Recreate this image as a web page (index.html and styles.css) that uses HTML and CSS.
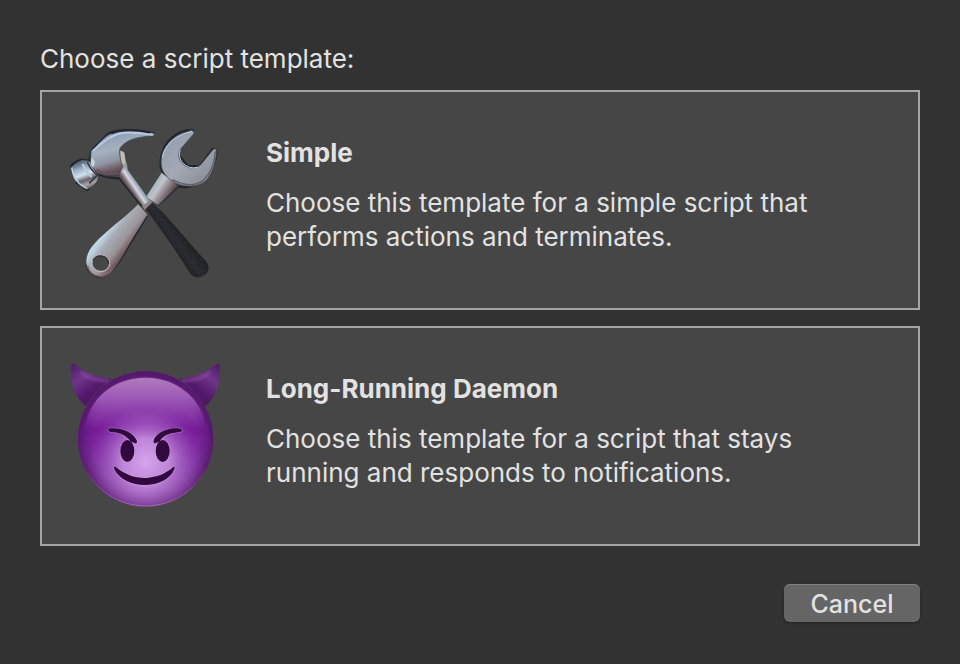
FILE: index.html
```html
<!DOCTYPE html>
<html lang="en">
<head>
<meta charset="utf-8">
<meta name="viewport" content="width=device-width, initial-scale=1">
<title>Choose a script template</title>
<link rel="stylesheet" href="styles.css">
</head>
<body>
<main class="dialog">
  <h1 class="prompt">Choose a script template:</h1>
  <div class="templates">
    <button type="button" class="template">
      <svg class="icon" viewBox="0 0 510 510" aria-hidden="true">
        <defs>
          <linearGradient id="wrenchHead" x1="0" y1="0" x2="1" y2="1"><stop offset="0" stop-color="#929daf"/><stop offset=".5" stop-color="#a3a8b4"/><stop offset="1" stop-color="#82858e"/></linearGradient>
          <linearGradient id="wrenchShaft" gradientUnits="userSpaceOnUse" x1="150" y1="340" x2="222" y2="396"><stop offset="0" stop-color="#bfd5e4"/><stop offset=".22" stop-color="#a9adb5"/><stop offset=".6" stop-color="#99949a"/><stop offset=".85" stop-color="#755a60"/><stop offset="1" stop-color="#49474c"/></linearGradient>
          <linearGradient id="wrenchNeck" gradientUnits="userSpaceOnUse" x1="284" y1="205" x2="332" y2="238"><stop offset="0" stop-color="#a5b5c4"/><stop offset=".3" stop-color="#c1c3ca"/><stop offset=".65" stop-color="#8d858c"/><stop offset="1" stop-color="#59464c"/></linearGradient>
          <linearGradient id="hammerHead" gradientUnits="userSpaceOnUse" x1="130" y1="65" x2="165" y2="185"><stop offset="0" stop-color="#8e9eb5"/><stop offset=".35" stop-color="#a6b0c0"/><stop offset=".62" stop-color="#8f95a2"/><stop offset=".82" stop-color="#6d5961"/><stop offset="1" stop-color="#393f47"/></linearGradient>
          <linearGradient id="hammerFace" gradientUnits="userSpaceOnUse" x1="65" y1="140" x2="94" y2="222"><stop offset="0" stop-color="#59677a"/><stop offset=".22" stop-color="#9bb0c5"/><stop offset=".45" stop-color="#d3e3f0"/><stop offset=".64" stop-color="#695f68"/><stop offset=".8" stop-color="#aaa4a6"/><stop offset="1" stop-color="#4b4d54"/></linearGradient>
          <linearGradient id="hammerNeck" gradientUnits="userSpaceOnUse" x1="206" y1="234" x2="247" y2="206"><stop offset="0" stop-color="#343a43"/><stop offset=".25" stop-color="#746267"/><stop offset=".5" stop-color="#d5d7e0"/><stop offset=".75" stop-color="#8d9db0"/><stop offset="1" stop-color="#3c424b"/></linearGradient>
          <linearGradient id="grip" gradientUnits="userSpaceOnUse" x1="325" y1="388" x2="366" y2="358"><stop offset="0" stop-color="#202225"/><stop offset=".5" stop-color="#2a2c30"/><stop offset="1" stop-color="#222326"/></linearGradient>
          <pattern id="dots" width="14" height="14" patternUnits="userSpaceOnUse" patternTransform="rotate(10)"><circle cx="4" cy="4" r="1.5" fill="#3b3e43"/></pattern>
          <filter id="soft" x="-10%" y="-10%" width="120%" height="120%"><feGaussianBlur stdDeviation="2.2"/></filter>
          <filter id="edge" x="-10%" y="-10%" width="120%" height="120%"><feGaussianBlur stdDeviation="1"/></filter>
        </defs>
        <g filter="url(#soft)" fill="none" stroke="#24272b" stroke-width="7">
          <path d="M401 46C355 40 307 80 302 137C300 162 309 177 320 185M358 124L384 153L419 154L461 99M326 202C365 229 420 214 447 180C461 160 468 130 470 105"/>
          <path d="M34 159C31 150 49 138 65 134L88 138L95 106L145 56Q190 34 284 55M48 202L83 225L119 178Q145 190 178 190L246 274"/>
          <path d="M354 214L294 270M261 302L235 345C198 401 164 482 122 485Q89 484 80 447"/>
        </g>
        <path d="M305 173L355 213L295 270L258 246Z" fill="url(#wrenchNeck)"/>
        <path d="M235 268L262 299L232 348C209 382 176 450 154 472C137 490 104 489 87 466C75 449 77 425 89 405C107 374 168 327 200 300ZM122 421A25 23 0 1 0 123 421Z" fill="url(#wrenchShaft)" fill-rule="evenodd"/>
        <path d="M83 452Q88 481 120 484Q143 482 157 462" fill="none" stroke="#7e626a" stroke-width="4" filter="url(#edge)"/>
        <ellipse cx="122" cy="445" rx="27" ry="25" fill="none" stroke="#c2bdc4" stroke-width="3"/>
        <path d="M99 436Q108 420 125 423Q145 427 146 447" fill="none" stroke="#363438" stroke-width="4"/>
        <path d="M388 49C394 43 404 49 401 56L359 105C350 126 363 148 380 155C397 163 416 159 426 145L459 104C464 99 471 104 469 112C467 145 456 180 435 199C407 221 362 215 335 197C310 180 301 158 304 132C309 94 337 65 372 54Z" fill="url(#wrenchHead)" stroke="#4c5460" stroke-width="2"/>
        <path d="M307 127C314 91 342 65 381 53L396 50M361 104Q353 121 366 142Q387 164 413 157" fill="none" stroke="#b9cce2" stroke-width="3" filter="url(#edge)"/>
        <path d="M466 109Q462 167 430 196Q391 223 337 194" fill="none" stroke="#665c66" stroke-width="4" filter="url(#edge)"/>
        <path d="M175 101L196 107Q203 118 203 164L275 264L252 279L176 184L162 170Z" fill="url(#hammerNeck)"/>
        <path d="M178 105L193 111L200 153L184 171Z" fill="#a3a09f"/>
        <path d="M182 107L192 115L196 145L184 148Z" fill="#c9bba6" filter="url(#edge)"/>
        <path d="M93 107C106 99 122 75 146 59C176 42 231 42 282 55L284 62C231 65 199 74 181 98C175 114 182 135 188 155L175 181C157 187 133 184 113 174L91 150Z" fill="url(#hammerHead)" stroke="#343c49" stroke-width="2"/>
        <path d="M99 108Q145 63 181 55Q219 49 278 60" fill="none" stroke="#b6cfeb" stroke-width="5" filter="url(#edge)"/>
        <path d="M153 56Q196 38 270 53" fill="none" stroke="#20252c" stroke-width="5" filter="url(#edge)"/>
        <path d="M94 128C107 135 107 151 98 157L92 147Z" fill="#c6d0dd" filter="url(#soft)"/>
        <path d="M110 163Q143 184 178 174" fill="none" stroke="#6f4f58" stroke-width="6" filter="url(#edge)"/>
        <path d="M34 157Q47 142 67 135Q83 136 89 140Q92 156 116 182Q112 206 84 223Q61 215 47 198Q34 178 34 157Z" fill="url(#hammerFace)"/>
        <path d="M35 158Q40 184 57 205Q67 214 82 221" fill="none" stroke="#b2d2e9" stroke-width="4"/>
        <path d="M82 141Q90 163 112 180L88 205" fill="none" stroke="#353b43" stroke-width="5" filter="url(#edge)"/>
        <path d="M68 147Q77 170 95 186" fill="none" stroke="#b8c9d8" stroke-width="7" filter="url(#soft)"/>
        <path d="M247 273L271 254L278 264L254 285Z" fill="#8f8589"/>
        <path d="M276 263C324 303 359 350 391 386L438 439C453 458 445 480 423 486Q405 491 391 477C354 416 311 354 257 282Z" fill="url(#grip)" filter="url(#edge)"/>
        <path d="M276 263C324 303 359 350 391 386L438 439C453 458 445 480 423 486Q405 491 391 477C354 416 311 354 257 282Z" fill="url(#dots)"/>
      </svg>
      <span class="copy">
        <strong class="name">Simple</strong>
        <span class="description">Choose this template for a simple script that performs actions and terminates.</span>
      </span>
    </button>
    <button type="button" class="template">
      <svg class="icon" viewBox="0 3 510 510" aria-hidden="true">
        <defs>
          <linearGradient id="face" x1="0" y1="0" x2="0" y2="1"><stop offset="0" stop-color="#a36db8"/><stop offset=".2" stop-color="#914aad"/><stop offset=".4" stop-color="#761b98"/><stop offset=".7" stop-color="#7e35a0"/><stop offset="1" stop-color="#8c589d"/></linearGradient>
          <radialGradient id="glow" gradientUnits="userSpaceOnUse" cx="257" cy="335" r="175"><stop offset="0" stop-color="#d5a4ed"/><stop offset=".4" stop-color="#c68fdf" stop-opacity=".9"/><stop offset=".75" stop-color="#a55dc6" stop-opacity=".45"/><stop offset="1" stop-color="#8a35ab" stop-opacity="0"/></radialGradient>
          <radialGradient id="rim"><stop offset=".78" stop-color="#521768" stop-opacity="0"/><stop offset="1" stop-color="#521768" stop-opacity=".75"/></radialGradient>
          <linearGradient id="crown" x1="0" y1="0" x2="0" y2="1"><stop offset="0" stop-color="#b07abc"/><stop offset=".4" stop-color="#9c57b7"/><stop offset="1" stop-color="#781c9b" stop-opacity="0"/></linearGradient>
          <linearGradient id="rimLight" x1="0" y1="0" x2="0" y2="1"><stop offset=".7" stop-color="#a372b2" stop-opacity="0"/><stop offset="1" stop-color="#a372b2"/></linearGradient>
          <linearGradient id="outer" x1="0" y1="0" x2="0" y2="1"><stop offset="0" stop-color="#5e1779"/><stop offset=".5" stop-color="#691a85"/><stop offset="1" stop-color="#874e99"/></linearGradient>
          <linearGradient id="horn" x1="0" y1="0" x2=".7" y2="1"><stop offset="0" stop-color="#4d1965"/><stop offset=".35" stop-color="#70358a"/><stop offset=".62" stop-color="#561a6f"/><stop offset="1" stop-color="#421052"/></linearGradient>
          <filter id="blur" x="-20%" y="-20%" width="140%" height="140%"><feGaussianBlur stdDeviation="4"/></filter>
          <filter id="halo" x="-20%" y="-20%" width="140%" height="140%"><feGaussianBlur stdDeviation="1.3"/></filter>
          <path id="hornShape" d="M34 45Q36 39 45 43C72 66 105 82 157 86Q115 108 77 168C42 140 30 93 34 45Z"/>
          <g id="features">
            <path d="M150 235C181 232 218 245 230 270Q233 282 225 280L213 275C194 252 176 247 151 246Q138 240 150 235Z"/>
            <ellipse cx="202" cy="303" rx="21" ry="33"/>
            <path d="M367 239Q361 233 346 235C316 236 291 249 282 268Q278 282 286 280L298 275C313 252 330 250 360 246Q367 245 367 239Z"/>
            <ellipse cx="308" cy="303" rx="21" ry="33"/>
            <path d="M167 350C218 395 291 394 339 352Q347 347 343 358C318 420 193 421 163 358Q160 348 167 350Z"/>
          </g>
        </defs>
        <use href="#hornShape" fill="url(#horn)"/>
        <path d="M61 67Q94 94 146 91" fill="none" stroke="#9156a8" stroke-width="8" opacity=".65" filter="url(#blur)"/>
        <g transform="translate(513 0) scale(-1 1)">
          <use href="#hornShape" fill="url(#horn)"/>
          <path d="M61 67Q94 94 146 91" fill="none" stroke="#9156a8" stroke-width="8" opacity=".65" filter="url(#blur)"/>
        </g>
        <circle cx="257" cy="267" r="203" fill="url(#outer)"/>
        <circle cx="257" cy="275" r="191" fill="url(#face)" filter="url(#blur)"/>
        <circle cx="257" cy="267" r="203" fill="url(#rim)"/>
        <path d="M77 241C81 146 162 83 257 83C352 83 432 148 437 241C351 202 163 202 77 241Z" fill="url(#crown)"/>
        <circle cx="257" cy="267" r="200" fill="url(#glow)"/>
        <circle cx="257" cy="267" r="201" fill="none" stroke="url(#rimLight)" stroke-width="3"/>
        <use href="#features" fill="none" stroke="#dbb5ec" stroke-width="4" opacity=".4" filter="url(#halo)"/>
        <use href="#features" fill="#31093f"/>
      </svg>
      <span class="copy">
        <strong class="name">Long-Running Daemon</strong>
        <span class="description">Choose this template for a script that stays running and responds to notifications.</span>
      </span>
    </button>
  </div>
  <div class="actions">
    <button type="button" class="cancel">Cancel</button>
  </div>
</main>
</body>
</html>
```
FILE: styles.css
```css
* {
  box-sizing: border-box;
}

body {
  margin: 0;
  background: #323232;
  color: #e2e2e2;
  font-family: Inter, "Liberation Sans", sans-serif;
  font-size: 26px;
  line-height: 34px;
}

button {
  font: inherit;
  color: inherit;
}

.dialog {
  padding: 42px 40px;
}

.prompt {
  margin: 0 0 14px;
  font-size: inherit;
  font-weight: inherit;
}

.templates {
  display: grid;
  gap: 16px;
}

.template {
  display: flex;
  align-items: flex-start;
  gap: 36px;
  width: 100%;
  padding: 23px 18px;
  border: 2px solid #a5a5a5;
  border-radius: 0;
  background: #464646;
  text-align: left;
}

.icon {
  flex: none;
  width: 170px;
  height: 170px;
}

.copy {
  display: grid;
  gap: 16px;
  max-width: 580px;
  padding-top: 21px;
}

.name {
  font-weight: 700;
}

.actions {
  display: flex;
  justify-content: flex-end;
  padding-top: 38px;
}

.cancel {
  min-width: 136px;
  height: 38px;
  padding: 0 24px;
  border: 0;
  border-radius: 6px;
  background: #656565;
  box-shadow: inset 0 1px #828282, 0 1px 2px #222222;
  font-size: 25px;
  font-weight: 500;
  line-height: 40px;
}
```
